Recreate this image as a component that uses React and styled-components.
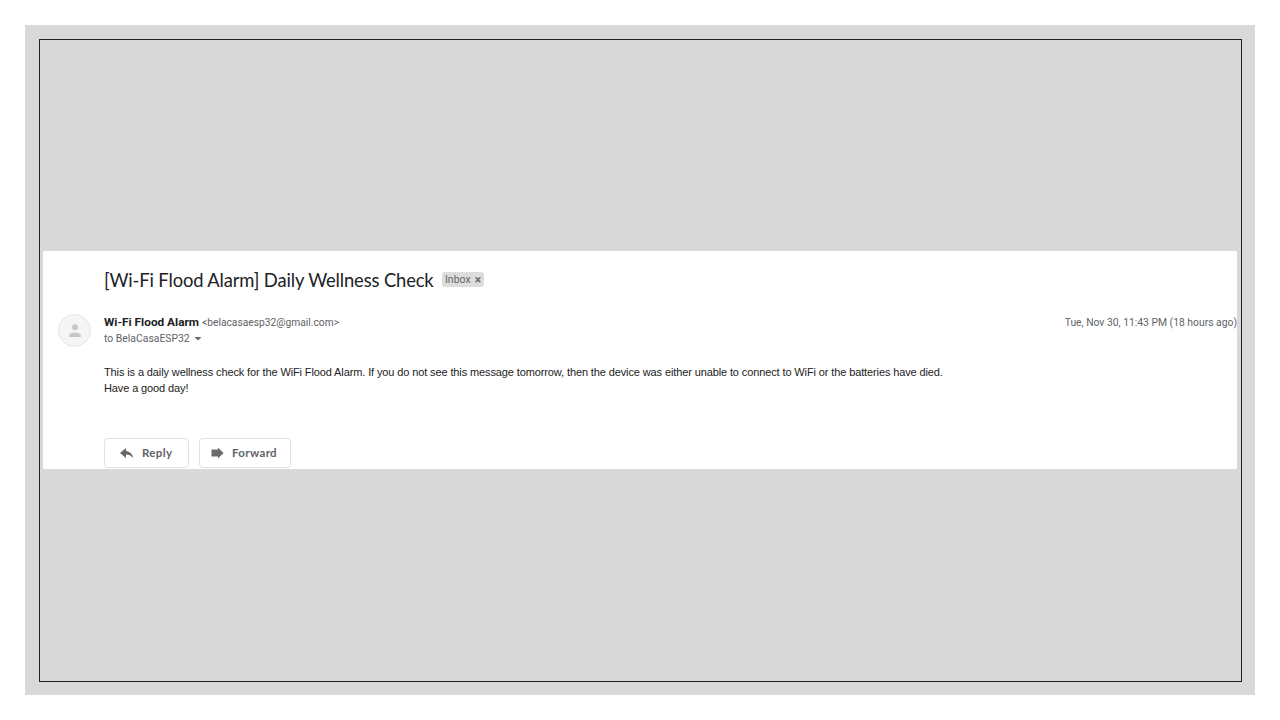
import React from 'react';
import styled, { createGlobalStyle } from 'styled-components';

const Global = createGlobalStyle`
  *{box-sizing:border-box}
  body{margin:0;background:#fff;font-family:Roboto,sans-serif}
`;
const Page = styled.div`width:1280px;height:720px;padding:25px;`;
const Mat = styled.div`width:1230px;height:670px;background:#d9d9d9;padding:14px 13px 13px 14px;`;
const Frame = styled.div`height:643px;border:1px solid #222;padding:211px 4px 0 3px;`;
const Mail = styled.article`height:218px;background:#fff;display:flex;flex-direction:column;`;
const Subject = styled.header`display:flex;align-items:center;height:57px;padding-left:61px;gap:9px;`;
const Title = styled.h1`margin:0;width:329px;font:400 18.4px/24px Lato,sans-serif;letter-spacing:-.14px;color:#202124;white-space:nowrap;`;
const Label = styled.span`display:flex;align-items:center;justify-content:space-between;width:42px;height:15px;padding:0 3px;border-radius:3px;background:#ddd;color:#666;font-size:10.5px;`;
const Remove = styled.span`font-weight:700;font-size:12px;`;
const Sender = styled.section`display:flex;height:56px;padding-top:6px;`;
const Avatar = styled.div`width:33px;height:33px;margin:0 13px 0 15px;border:1px solid #e4e4e4;border-radius:50%;background:#f5f5f5;display:flex;align-items:center;justify-content:center;`;
const Details = styled.div`flex:1;padding-top:1px;font-size:10.4px;line-height:16px;color:#5f6368;white-space:nowrap;`;
const Line = styled.div`display:flex;align-items:center;gap:3px;height:16px;`;
const Name = styled.strong`padding-bottom:2px;font-size:11.8px;color:#202124;`;
const Address = styled.span`font-size:10.25px;`;
const When = styled.time`padding-top:1px;font-size:10.35px;line-height:16px;color:#5f6368;white-space:nowrap;`;
const Body = styled.p`margin:0;padding:0 0 0 61px;height:74px;font:11px/16px "Liberation Sans",sans-serif;letter-spacing:-.117px;color:#222;white-space:nowrap;`;
const Actions = styled.footer`display:flex;gap:10px;padding-left:61px;`;
const Button = styled.button`width:${p => p.$width}px;height:30px;border:1px solid #dfe0e4;border-radius:4px;background:#fff;color:#5f6368;display:flex;align-items:center;padding:0 0 1px ${p => p.$inset}px;gap:8px;font:700 11.5px Lato,sans-serif;letter-spacing:.35px;`;

export default function App() {
  return <><Global /><Page><Mat><Frame><Mail>
    <Subject><Title>[Wi-Fi Flood Alarm] Daily Wellness Check</Title><Label>Inbox <Remove>×</Remove></Label></Subject>
    <Sender><Avatar><svg width="15" height="15" viewBox="0 0 15 15" fill="#c8c8c8"><circle cx="8" cy="4.300" r="3"/><path d="M2 14v-1.500C2 10.500 5.500 9.500 8 9.500S14 10.500 14 12.500V14z"/></svg></Avatar>
      <Details><Line><Name>Wi-Fi Flood Alarm</Name><Address>&lt;belacasaesp32@gmail.com&gt;</Address></Line><Line>to BelaCasaESP32<svg width="10" height="6"><path d="M1.500 1h7L5 4.500z" fill="#666"/></svg></Line></Details>
      <When>Tue, Nov 30, 11:43 PM (18 hours ago)</When></Sender>
    <Body>This is a daily wellness check for the WiFi Flood Alarm. If you do not see this message tomorrow, then the device was either unable to connect to WiFi or the batteries have died.<br/>Have a good day!</Body>
    <Actions><Button $width={85} $inset={15}><svg width="14" height="12" viewBox="0 0 14 12"><path d="M6 1v3c4 .500 6.500 3 7 7-2-2.500-4-3.500-7-3.500V11L0 6z" fill="#666"/></svg>Reply</Button><Button $width={92} $inset={11}><svg width="13" height="12" viewBox="0 0 13 12"><path d="M.500 2.500H7V.500L12.500 6 7 11.500v-2H.500z" fill="#6b6b6b"/></svg>Forward</Button></Actions>
  </Mail></Frame></Mat></Page></>;
}
